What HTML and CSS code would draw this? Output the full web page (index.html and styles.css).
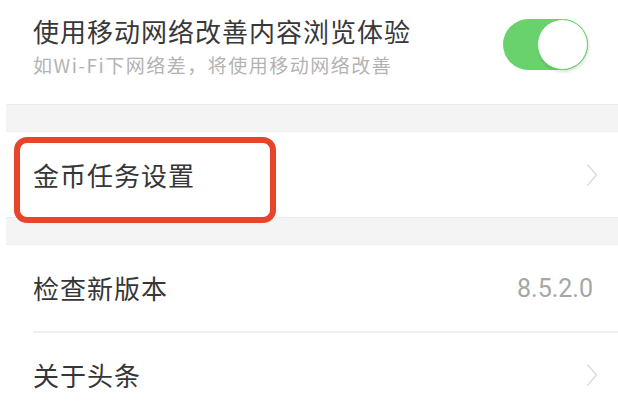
FILE: index.html
```html
<!DOCTYPE html>
<html lang="zh-CN">
<head>
<meta charset="utf-8">
<link rel="stylesheet" href="styles.css">
</head>
<body>
<div class="page">
  <div class="row row-top">
    <div class="texts">
      <div class="title">使用移动网络改善内容浏览体验</div>
      <div class="subtitle">如Wi-Fi下网络差，将使用移动网络改善</div>
    </div>
    <div class="switch"><span class="knob"></span></div>
  </div>
  <div class="band"></div>
  <div class="row row-mid">
    <div class="label">金币任务设置</div>
    <svg class="chev" width="12" height="24" viewBox="0 0 12 24"><polyline points="1.5,1.5 10.5,12 1.5,22.5" fill="none" stroke="#dcdcdc" stroke-width="1.4"/></svg>
    <div class="highlight"></div>
  </div>
  <div class="band"></div>
  <div class="row row-ver">
    <div class="label">检查新版本</div>
    <div class="version">8.5.2.0</div>
  </div>
  <div class="divider"></div>
  <div class="row row-about">
    <div class="label">关于头条</div>
    <svg class="chev" width="12" height="24" viewBox="0 0 12 24"><polyline points="1.5,1.5 10.5,12 1.5,22.5" fill="none" stroke="#dcdcdc" stroke-width="1.4"/></svg>
  </div>
</div>
</body>
</html>
```
FILE: styles.css
```css
* { box-sizing: border-box; }
html, body {
  margin: 0;
  padding: 0;
  background: #ffffff;
  overflow: hidden;
}
body {
  width: 618px;
  height: 408px;
  font-family: "Noto Sans CJK SC", "Noto Sans", sans-serif;
  color: #333333;
}
.page {
  display: flex;
  flex-direction: column;
  padding-left: 6px;
  position: relative;
}
.row {
  display: flex;
  align-items: center;
  justify-content: space-between;
  padding: 0 20px 0 27px;
  position: relative;
  background: #fff;
}
.row-top {
  height: 104px;
  align-items: flex-start;
  padding-top: 16px;
  padding-right: 30px;
}
.texts {
  display: flex;
  flex-direction: column;
}
.title {
  font-size: 26px;
  line-height: 30px;
  letter-spacing: 1px;
  color: #383838;
}
.subtitle {
  margin-top: 8px;
  font-size: 19px;
  line-height: 22px;
  letter-spacing: 1.5px;
  color: #b3b3b3;
}
.switch {
  position: relative;
  width: 85px;
  height: 51px;
  margin-top: 3px;
  border-radius: 26px;
  background: #6ad26c;
}
.knob {
  position: absolute;
  right: 0;
  top: 0;
  width: 51px;
  height: 51px;
  border-radius: 50%;
  background: #fff;
  border: 1.5px solid #6ad26c;
  box-shadow: 1px 2px 3px rgba(0,0,0,0.12);
}
.band {
  height: 28px;
  background: #f4f4f4;
  border-top: 1px solid #ececec;
  border-bottom: 1px solid #eeeeee;
}
.row-mid { height: 85px; }
.row-ver { height: 86px; }
.row-about { height: 84px; }
.label {
  font-size: 26px;
  line-height: 30px;
  letter-spacing: 1px;
  color: #363636;
}
.version {
  font-family: Roboto, "Liberation Sans", sans-serif;
  font-size: 25px;
  color: #a6a6a6;
  margin-right: 5px;
}
.chev {
  display: block;
}
.divider {
  height: 2px;
  background: #f0f0f0;
  margin-left: 27px;
}
.highlight {
  position: absolute;
  left: 8px;
  top: 5px;
  width: 262px;
  height: 86px;
  border: 6px solid #e8432b;
  border-radius: 13px;
  pointer-events: none;
}
```
